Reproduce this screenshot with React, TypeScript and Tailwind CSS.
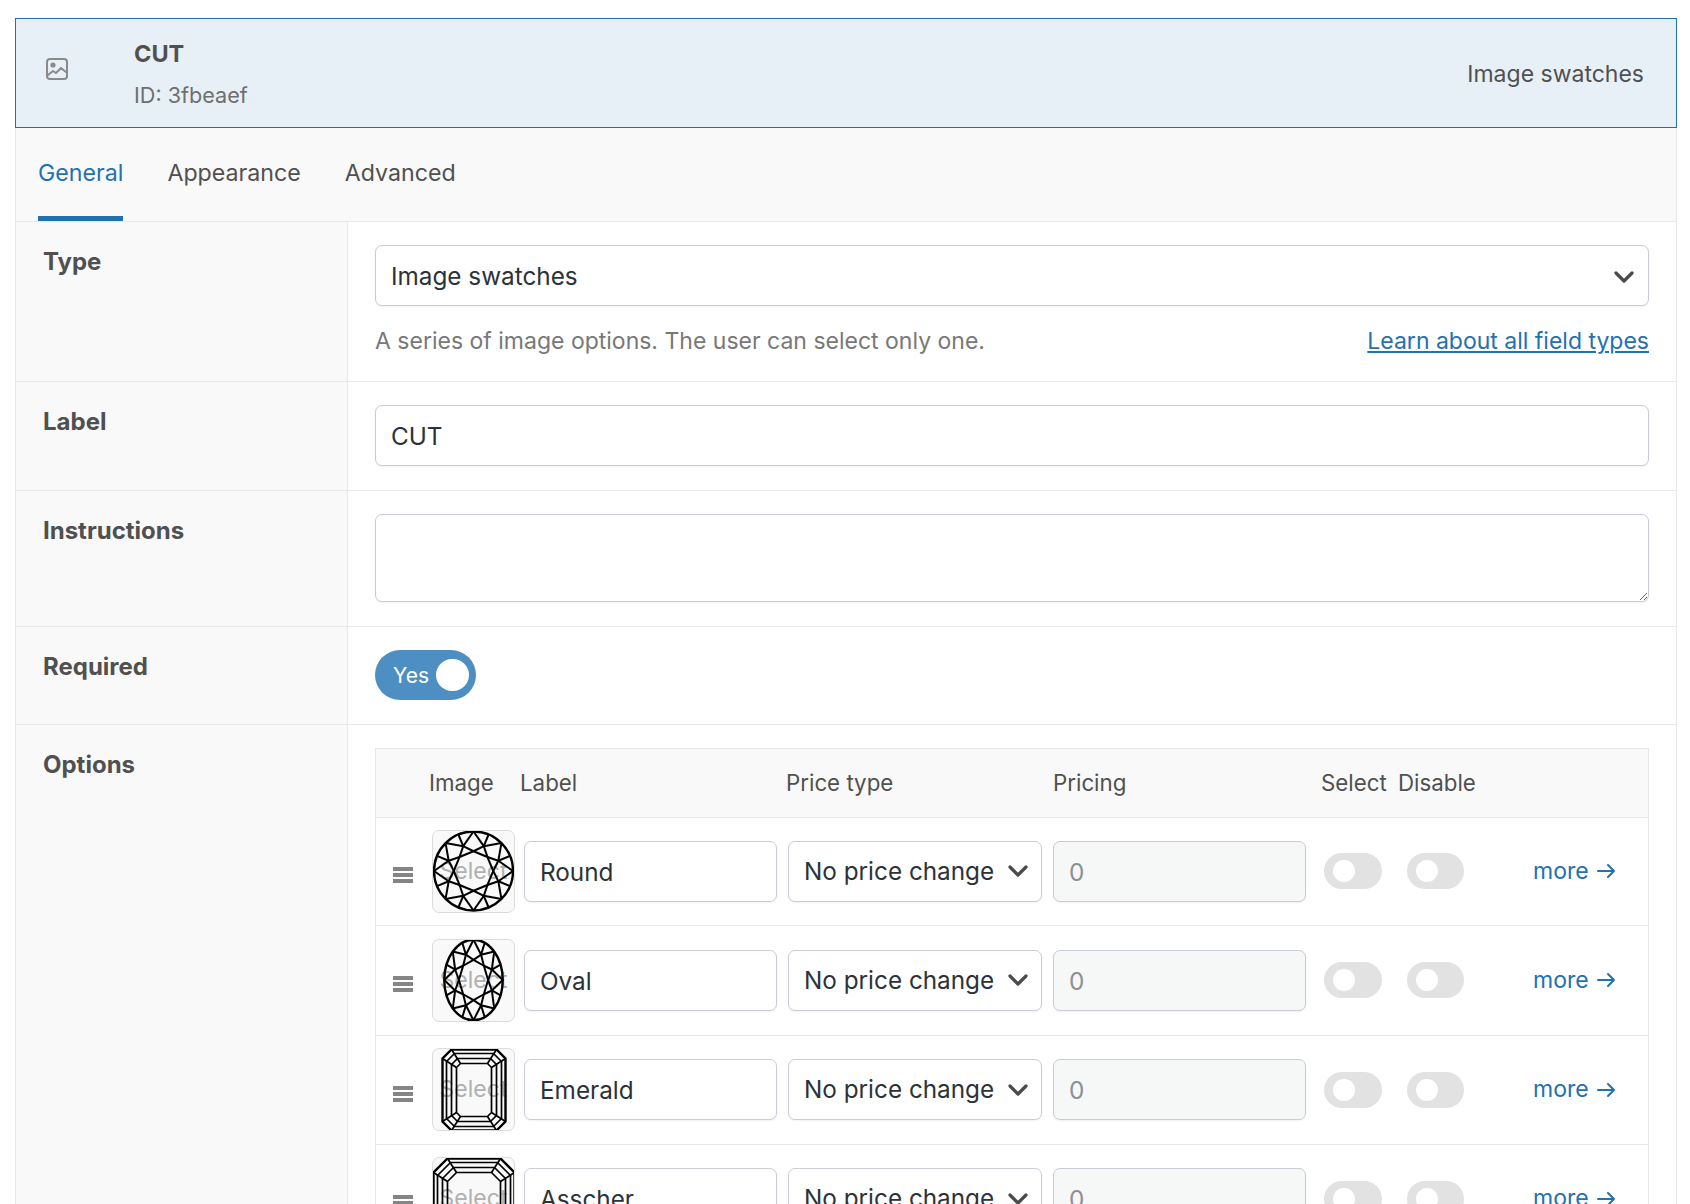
import React from "react";

const FONT = "[font-family:Inter,'Liberation_Sans',sans-serif]";

const pt = (r: number, a: number, sx = 1, sy = 1): [number, number] => {
  const t = ((a - 90) * Math.PI) / 180;
  return [40.5 + r * sx * Math.cos(t), 41 + r * sy * Math.sin(t)];
};

function Brilliant({ sx, sy }: { sx: number; sy: number }) {
  const lines: [number, number][][] = [];
  const R = 39.5;
  for (let k = 0; k < 8; k++) {
    const a = 45 * k;
    const A0 = pt(R, a, sx, sy);
    const A1 = pt(R, a + 45, sx, sy);
    const O = pt(R, a + 22.5, sx, sy);
    const B = pt(R * 0.68, a + 22.5, sx, sy);
    const C0 = pt(R * 0.5, a, sx, sy);
    const C1 = pt(R * 0.5, a + 45, sx, sy);
    lines.push([A0, B], [A1, B], [O, B], [B, C0], [B, C1], [C0, C1]);
  }
  return (
    <svg viewBox="0 0 82 82" className="h-[82px] w-[82px]" fill="none" stroke="#000" strokeWidth="2">
      <ellipse cx="40.5" cy="41" rx={R * sx} ry={R * sy} strokeWidth="2.4" />
      {lines.map((l, i) => (
        <line key={i} x1={l[0][0]} y1={l[0][1]} x2={l[1][0]} y2={l[1][1]} />
      ))}
    </svg>
  );
}

function StepCut({ w, h }: { w: number; h: number }) {
  const big = w === 81;
  const rings = [
    { i: 0, c: big ? 14 : 9 },
    { i: 4, c: big ? 13 : 8 },
    { i: 9, c: big ? 11 : 6 },
    { i: 14, c: big ? 9 : 4 },
  ];
  const x0 = (82 - w) / 2;
  const y0 = (82 - h) / 2;
  const poly = (i: number, c: number) => {
    const l = x0 + i, r = x0 + w - i, t = y0 + i, b = y0 + h - i;
    return `${l + c},${t} ${r - c},${t} ${r},${t + c} ${r},${b - c} ${r - c},${b} ${l + c},${b} ${l},${b - c} ${l},${t + c}`;
  };
  const a = rings[0], z = rings[3];
  const ox = [x0 + a.c, x0 + w - a.c];
  return (
    <svg viewBox="0 0 82 82" className="h-[82px] w-[82px]" fill="none" stroke="#000" strokeWidth="1.7">
      {rings.map((q, i) => (
        <polygon key={i} points={poly(q.i, q.c)} strokeWidth={i === 0 ? 2.4 : 1.7} />
      ))}
      <line x1={x0} y1={y0 + a.c} x2={x0 + z.i} y2={y0 + z.i + z.c} />
      <line x1={x0 + a.c} y1={y0} x2={x0 + z.i + z.c} y2={y0 + z.i} />
      <line x1={x0 + w} y1={y0 + a.c} x2={x0 + w - z.i} y2={y0 + z.i + z.c} />
      <line x1={ox[1]} y1={y0} x2={x0 + w - z.i - z.c} y2={y0 + z.i} />
      <line x1={x0} y1={y0 + h - a.c} x2={x0 + z.i} y2={y0 + h - z.i - z.c} />
      <line x1={ox[0]} y1={y0 + h} x2={x0 + z.i + z.c} y2={y0 + h - z.i} />
      <line x1={x0 + w} y1={y0 + h - a.c} x2={x0 + w - z.i} y2={y0 + h - z.i - z.c} />
      <line x1={ox[1]} y1={y0 + h} x2={x0 + w - z.i - z.c} y2={y0 + h - z.i} />
    </svg>
  );
}

function Chevron({ size = 20 }: { size?: number }) {
  return (
    <svg width={size} height={size * 0.6} viewBox="0 0 20 12" fill="none" stroke="#4a4a4a" strokeWidth="3.2" strokeLinecap="round" strokeLinejoin="round">
      <path d="M2 2l8 8 8-8" />
    </svg>
  );
}

function Off({ w }: { w: string }) {
  return (
    <div className={`flex h-9 items-center rounded-full bg-[#e2e2e2] pl-[9px] ${w}`}>
      <div className="h-[22px] w-[22px] rounded-full bg-white" />
    </div>
  );
}

const inputCls =
  "rounded-[7px] border border-[#c9ccd6] shadow-[0_1px_2px_rgba(0,0,0,0.06)] text-[24.3px] text-[#2c3338]";

function Row({ name, h, art }: { name: string; h: string; art: React.ReactNode }) {
  return (
    <div className={`flex items-center border-b border-[#e8e8e8] pb-[1px] ${h}`}>
      <div className="flex w-[56px] shrink-0 flex-col gap-[2px] pl-[17px] pt-[8px]">
        <div className="h-[4px] w-5 bg-[#858585]" />
        <div className="h-[4px] w-5 bg-[#858585]" />
        <div className="h-[4px] w-5 bg-[#858585]" />
      </div>
      <div className="w-[92px] shrink-0">
        <div className="flex h-[83px] w-[83px] items-center justify-center overflow-hidden rounded-[7px] border border-[#dcdcde] bg-[#f9f9f9]">
          <div className="grid place-items-center">
            <span className="col-start-1 row-start-1 text-[23px] text-[#b0b0b0]">Select</span>
            <div className="col-start-1 row-start-1">{art}</div>
          </div>
        </div>
      </div>
      <div className="w-[264px] shrink-0">
        <input readOnly value={name} className={`${inputCls} h-[61px] w-[253px] bg-white px-[15px] pt-[1px] outline-none`} />
      </div>
      <div className="w-[265px] shrink-0">
        <div className={`${inputCls} flex h-[61px] w-[254px] items-center justify-between bg-white pl-[15px] pr-[13px]`}>
          <span>No price change</span>
          <Chevron />
        </div>
      </div>
      <div className="w-[271px] shrink-0">
        <input readOnly value="0" className={`${inputCls} h-[61px] w-[253px] bg-[#f6f7f7] px-[15px] pt-[1px] text-[#8c8f94] outline-none`} />
      </div>
      <div className="w-[83px] shrink-0"><Off w="w-[58px]" /></div>
      <div className="w-[126px] shrink-0"><Off w="w-[57px]" /></div>
      <div className="flex items-center gap-[8px] text-[23px] text-[#2271b1]">
        <span>more</span>
        <svg width="19" height="16" viewBox="0 0 19 16" fill="none" stroke="#2271b1" strokeWidth="2" strokeLinecap="round" strokeLinejoin="round">
          <path d="M1 8h16M11 2l6 6-6 6" />
        </svg>
      </div>
    </div>
  );
}

function Field({ label, h, children }: { label: string; h: string; children: React.ReactNode }) {
  return (
    <div className={`flex border-b border-[#e8e8e8] ${h}`}>
      <div className="w-[332px] shrink-0 border-r border-[#e8e8e8] bg-[#f9f9f9] pl-[27px] pt-[24px] text-[24px] font-bold leading-[32px] text-[#505050]">
        {label}
      </div>
      <div className="min-w-0 flex-1 pl-[27px] pr-[27px] pt-[23px]">{children}</div>
    </div>
  );
}

export default function App() {
  return (
    <div className={`h-[1204px] overflow-hidden bg-white pl-[15px] pr-[13px] pt-[18px] ${FONT}`}>
      <div className="flex h-[110px] items-center border border-[#2271b1] bg-[#e8f0f7] pr-[32px]">
        <div className="flex w-[118px] shrink-0 pb-[8px] pl-[30px]">
          <svg width="22" height="22" viewBox="0 0 22 22" fill="none" stroke="#8a8a8a" strokeWidth="2" strokeLinejoin="round" strokeLinecap="round">
            <rect x="1" y="1" width="20" height="20" rx="3" />
            <circle cx="7" cy="7" r="1.6" fill="#8a8a8a" />
            <path d="M2 17l5-4 3 2 5-5 5 4" />
          </svg>
        </div>
        <div className="flex-1 pt-[2px]">
          <div className="text-[23.5px] font-bold leading-[30px] text-[#505050]">CUT</div>
          <div className="mt-[11px] text-[21.6px] leading-[30px] text-[#6f6f6f]">ID: 3fbeaef</div>
        </div>
        <div className="pt-[2px] text-[23px] text-[#505050]">Image swatches</div>
      </div>

      <div className="border-x border-[#e8e8e8]">
        <div className="flex h-[94px] items-end gap-[44px] border-b border-[#e8e8e8] bg-[#f9f9f9] pl-[22px] text-[23.2px] text-[#505050]">
          <div className="flex h-[93px] items-center border-b-[5px] border-[#2271b1] pt-[3px] text-[#2271b1]">General</div>
          <div className="flex h-[93px] items-center border-b-[5px] border-transparent pt-[3px]">Appearance</div>
          <div className="flex h-[93px] items-center border-b-[5px] border-transparent pt-[3px]">Advanced</div>
        </div>

        <Field label="Type" h="h-[160px]">
          <div className={`${inputCls} flex h-[61px] items-center justify-between bg-white pl-[15px] pr-[14px] pt-[2px]`}>
            <span>Image swatches</span>
            <Chevron />
          </div>
          <div className="mt-[19px] flex items-center justify-between text-[23px] leading-[32px] text-[#787878]">
            <span>A series of image options. The user can select only one.</span>
            <span className="text-[#2271b1] underline">Learn about all field types</span>
          </div>
        </Field>

        <Field label="Label" h="h-[109px]">
          <input readOnly value="CUT" className={`${inputCls} h-[61px] w-full bg-white px-[15px] pt-[1px] outline-none`} />
        </Field>

        <Field label="Instructions" h="h-[136px]">
          <textarea readOnly className={`${inputCls} block h-[88px] w-full bg-white px-[15px] outline-none`} />
        </Field>

        <Field label="Required" h="h-[98px]">
          <div className="flex h-[50px] w-[101px] items-center justify-between rounded-full bg-[#4e8fc3] pl-[18px] pr-[7px] text-[21px] text-white">
            <span className="pt-[2px]">Yes</span>
            <div className="h-[32px] w-[33px] rounded-full bg-white" />
          </div>
        </Field>

        <div className="flex">
          <div className="h-[600px] w-[332px] shrink-0 border-r border-[#e8e8e8] bg-[#f9f9f9] pl-[27px] pt-[24px] text-[24px] font-bold leading-[32px] text-[#505050]">
            Options
          </div>
          <div className="min-w-0 flex-1 pl-[27px] pr-[27px] pt-[23px]">
            <div className="border border-[#e8e8e8]">
              <div className="flex h-[69px] items-center border-b border-[#e8e8e8] bg-[#f9f9f9] pb-[1px] pl-[53px] text-[22.3px] text-[#505050]">
                <div className="w-[91px] shrink-0">Image</div>
                <div className="w-[266px] shrink-0">Label</div>
                <div className="w-[267px] shrink-0">Price type</div>
                <div className="w-[268px] shrink-0">Pricing</div>
                <div className="w-[77px] shrink-0">Select</div>
                <div>Disable</div>
              </div>
              <Row name="Round" h="h-[108px]" art={<Brilliant sx={1} sy={1} />} />
              <Row name="Oval" h="h-[110px]" art={<Brilliant sx={0.74} sy={1.02} />} />
              <Row name="Emerald" h="h-[109px]" art={<StepCut w={63} h={81} />} />
              <Row name="Asscher" h="h-[109px]" art={<StepCut w={81} h={81} />} />
            </div>
          </div>
        </div>
      </div>
    </div>
  );
}
